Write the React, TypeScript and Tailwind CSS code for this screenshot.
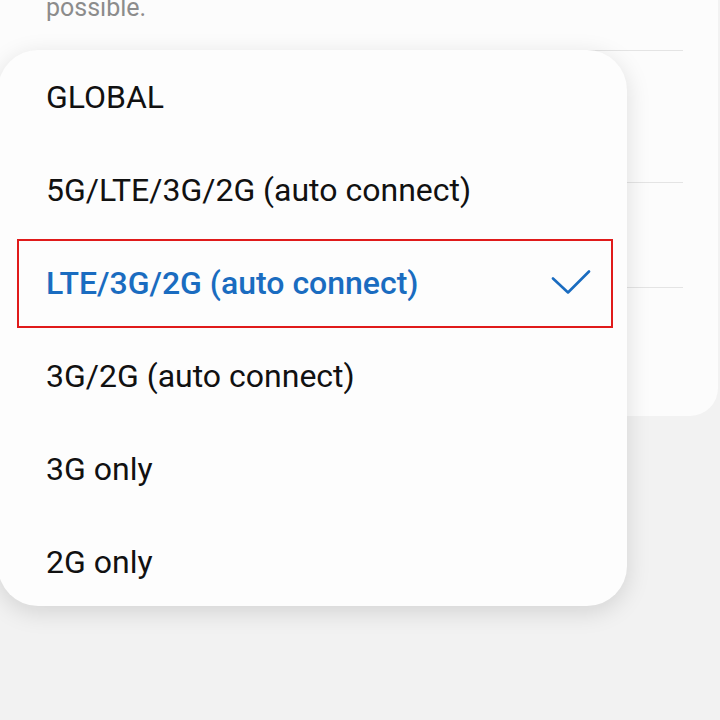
const options = [
  "GLOBAL",
  "5G/LTE/3G/2G (auto connect)",
  "LTE/3G/2G (auto connect)",
  "3G/2G (auto connect)",
  "3G only",
  "2G only",
];
const SELECTED = 2;

export default function App() {
  return (
    <div className="relative h-[720px] w-[720px] overflow-hidden bg-[#f2f2f2] font-['Roboto',sans-serif]">
      {/* Settings card behind the menu */}
      <div className="h-[416px] w-[718px] overflow-hidden rounded-br-[28px] bg-[#fcfcfc]">
        <p className="-mt-[5px] pl-[46px] text-[25px] leading-[25px] text-[#8c8c8c]">possible.</p>
        <div className="ml-[46px] mt-[30px] w-[637px] border-t border-[#e4e4e4]" />
        <div className="ml-[46px] mt-[131px] w-[637px] border-t border-[#e4e4e4]" />
        <div className="ml-[46px] mt-[104px] w-[637px] border-t border-[#e4e4e4]" />
      </div>

      {/* Network mode menu */}
      <div className="absolute left-[-2px] top-[50px] h-[556px] w-[629px] rounded-[40px] bg-[#fdfdfd] shadow-[0_6px_24px_rgba(0,0,0,0.13)]">
        <ul className="flex flex-col">
          {options.map((label, i) => (
            <li key={label} className="relative flex h-[93px] items-center pl-[48px] pr-[36px]">
              <span
                className={
                  i === SELECTED
                    ? "text-[32px] font-medium text-[#1a6cc0]"
                    : "text-[32px] text-[#111]"
                }
              >
                {label}
              </span>
              {i === SELECTED && (
                <>
                  <svg className="ml-auto" width="40" height="26" viewBox="0 0 40 26">
                    <polyline
                      points="2,8.5 17,22.5 38,1.5"
                      fill="none"
                      stroke="#1a6cc0"
                      strokeWidth="2.6"
                      strokeLinecap="round"
                      strokeLinejoin="round"
                    />
                  </svg>
                  <div className="absolute left-[19px] top-[3px] h-[89px] w-[596px] border-[2.5px] border-[#e01b1b]" />
                </>
              )}
            </li>
          ))}
        </ul>
      </div>
    </div>
  );
}
